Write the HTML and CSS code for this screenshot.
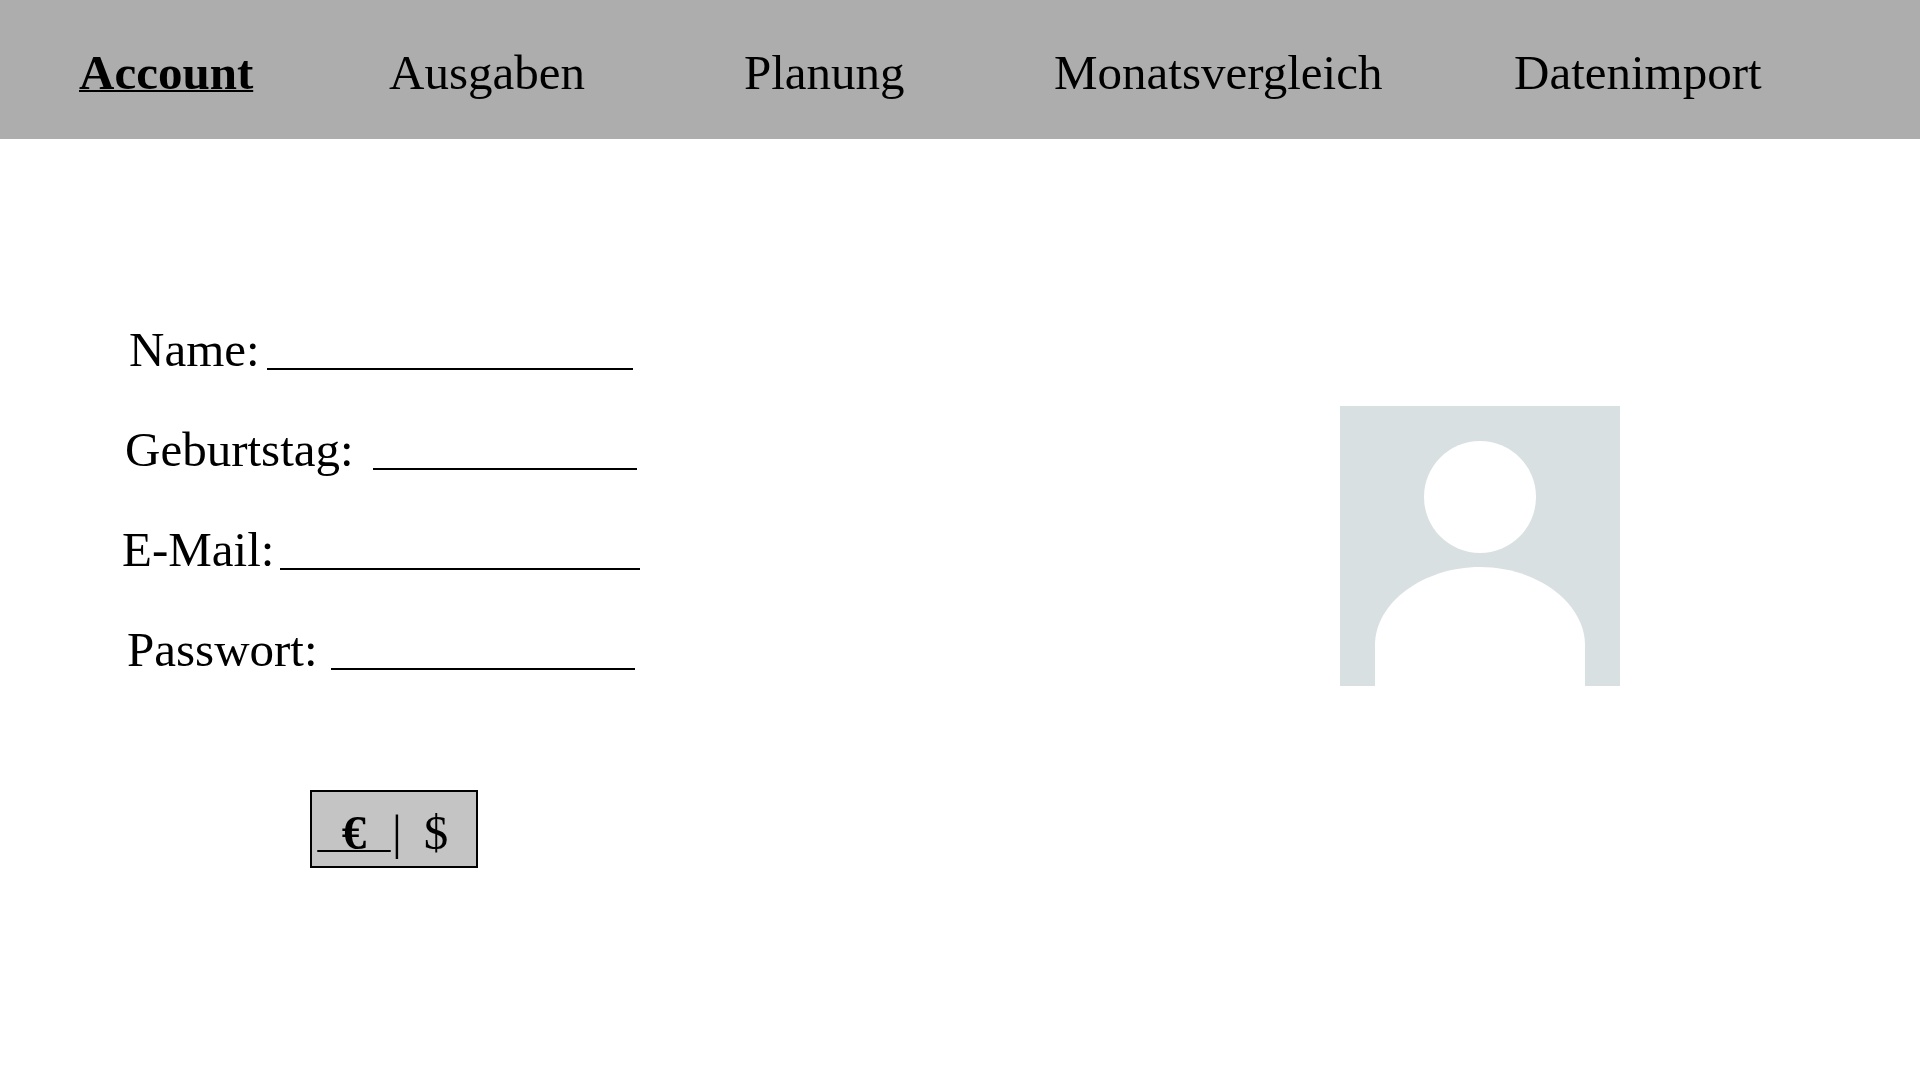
FILE: index.html
```html
<!DOCTYPE html>
<html lang="de">
<head>
<meta charset="utf-8">
<meta name="viewport" content="width=device-width, initial-scale=1">
<title>Account</title>
<link rel="stylesheet" href="styles.css">
</head>
<body>
<header class="topbar">
  <nav class="nav">
    <a class="nav-link active" href="#account" aria-current="page">Account</a>
    <a class="nav-link" href="#ausgaben">Ausgaben</a>
    <a class="nav-link" href="#planung">Planung</a>
    <a class="nav-link" href="#monatsvergleich">Monatsvergleich</a>
    <a class="nav-link" href="#datenimport">Datenimport</a>
  </nav>
</header>
<main class="content">
  <form class="profile">
    <div class="field name">
      <label for="name">Name:</label>
      <input id="name" type="text">
    </div>
    <div class="field birthday">
      <label for="birthday">Geburtstag:</label>
      <input id="birthday" type="text">
    </div>
    <div class="field email">
      <label for="email">E-Mail:</label>
      <input id="email" type="email">
    </div>
    <div class="field password">
      <label for="password">Passwort:</label>
      <input id="password" type="password">
    </div>
    <div class="currency" role="group">
      <button class="currency-option selected" type="button" aria-pressed="true">&nbsp;&nbsp;€&nbsp;&nbsp;</button>
      <span>|</span>
      <button class="currency-option other" type="button" aria-pressed="false">$</button>
    </div>
  </form>
  <svg class="avatar" viewBox="0 0 280 280" aria-hidden="true">
    <rect width="280" height="280" fill="#d9e0e2"/>
    <circle cx="140" cy="91" r="56" fill="#fff"/>
    <path d="M35 280V239C35 197 83 161 140 161S245 197 245 239V280Z" fill="#fff"/>
  </svg>
</main>
</body>
</html>
```

FILE: styles.css
```css
* {
  box-sizing: border-box;
}

body {
  margin: 0;
  background: #fff;
  color: #000;
  font-family: "Liberation Serif", "Times New Roman", serif;
  font-size: 49px;
  line-height: 54px;
}

.topbar {
  padding: 46px 0 39px 79px;
  background: #adadad;
}

.nav {
  display: grid;
  grid-template-columns: 310fr 355fr 310fr 460fr 406fr;
}

.nav-link {
  justify-self: start;
  color: inherit;
  text-decoration: none;
}

.nav-link.active {
  font-weight: bold;
  text-decoration: underline;
  text-decoration-thickness: 2px;
  text-decoration-skip-ink: none;
  text-underline-offset: 1px;
}

.content {
  display: grid;
  grid-template-columns: 762fr 880fr;
  column-gap: 278px;
  padding-top: 184px;
}

.profile {
  display: flex;
  flex-direction: column;
  align-items: center;
  gap: 46px;
}

.field {
  display: flex;
  justify-content: space-between;
  align-items: flex-start;
  gap: 6px;
}

.field label {
  flex: none;
}

.field input {
  min-width: 0;
  height: 47px;
  padding: 0;
  border: 0;
  border-bottom: 2px solid #000;
  background: transparent;
  color: inherit;
  font: inherit;
}

.name {
  width: 504px;
}

.birthday {
  width: 512px;
}

.email {
  width: 518px;
}

.password {
  width: 508px;
}

.name input,
.email input {
  width: 366px;
}

.birthday input {
  width: 264px;
}

.password input {
  width: 304px;
}

.currency {
  display: flex;
  width: 168px;
  margin: 67px 0 0 26px;
  padding: 14px 6px 6px 4px;
  border: 2px solid #000;
  background: #c4c4c4;
}

.currency-option {
  padding: 0;
  border: 0;
  background: transparent;
  color: inherit;
  font: inherit;
}

.currency-option.selected {
  width: 76px;
  font-weight: bold;
  text-decoration: underline;
  text-decoration-thickness: 2px;
  text-decoration-skip-ink: none;
  text-underline-offset: 1px;
}

.currency-option.other {
  flex: 1;
}

.avatar {
  width: 280px;
  height: 280px;
  margin-top: 83px;
  justify-self: center;
}
```
